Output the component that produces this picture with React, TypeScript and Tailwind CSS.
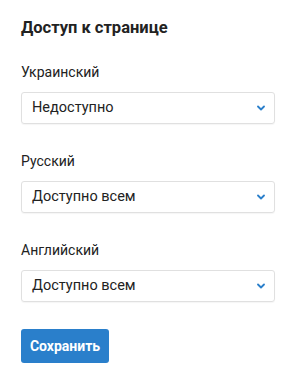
import React from 'react';

const fields = [
  { label: 'Украинский', value: 'Недоступно' },
  { label: 'Русский', value: 'Доступно всем' },
  { label: 'Английский', value: 'Доступно всем' },
];

const Chevron = () => (
  <svg width="8" height="6" viewBox="0 0 8 6" fill="none">
    <path d="M1 1.5l3 3 3-3" stroke="#2a7fcb" strokeWidth="1.8" strokeLinecap="round" strokeLinejoin="round" />
  </svg>
);

export default function App() {
  return (
    <div className="w-[300px] h-[386px] bg-white px-[21px] pt-[16px] text-[#222] font-['Roboto',sans-serif]">
      <h3 className="text-[16.5px] leading-6 font-bold">Доступ к странице</h3>
      <div className="mt-[22px] flex flex-col gap-[27px]">
        {fields.map((f) => (
          <div key={f.label}>
            <div className="text-[14px] leading-5 mb-[10px]">{f.label}</div>
            <div className="w-[254px] h-[32px] flex items-center justify-between pl-[10px] pr-[9px] border border-[#e0e0e0] rounded-[3px] shadow-[0_1px_1px_rgba(0,0,0,0.04)]">
              <span className="text-[14.5px]">{f.value}</span>
              <Chevron />
            </div>
          </div>
        ))}
      </div>
      <button className="mt-[27px] w-[88px] h-[34px] rounded-[3px] bg-[#2a7fcb] text-white text-[14px] font-bold">
        Сохранить
      </button>
    </div>
  );
}
